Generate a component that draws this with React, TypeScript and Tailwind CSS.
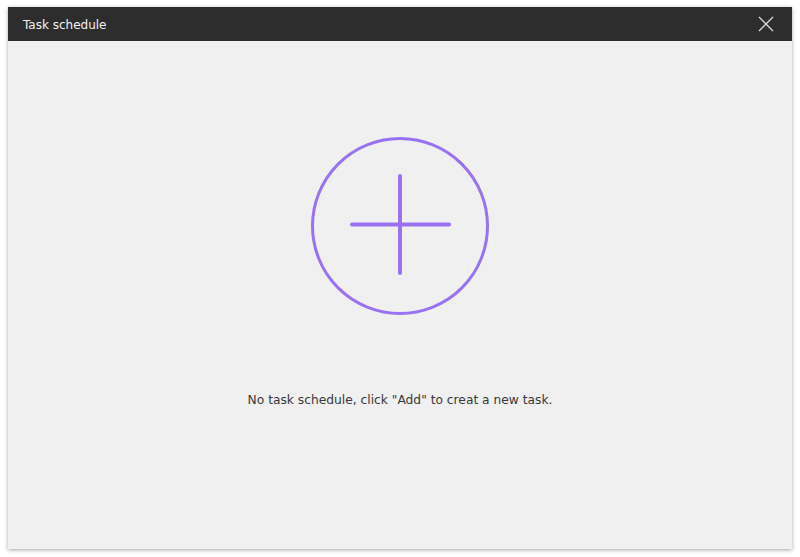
export default function App() {
  return (
    <div className="w-[800px] h-[557px] bg-white pt-[7px] pl-[8px]" style={{ fontFamily: '"DejaVu Sans", "Liberation Sans", sans-serif' }}>
      <div className="w-[784px] h-[542px] flex flex-col bg-[#f0f0f0] shadow-[0_1px_4px_rgba(0,0,0,0.35)]">
        {/* Title bar */}
        <div className="h-[34px] bg-[#2d2d2d] flex items-center justify-between pl-[15px] pr-[18px] shrink-0">
          <span className="text-[12px] text-[#f2f2f2] pt-[2px]">Task schedule</span>
          <button type="button" className="w-[16px] h-[16px] flex items-center justify-center">
            <svg width="16" height="16" viewBox="0 0 16 16">
              <path d="M1 1 L15 15 M15 1 L1 15" stroke="#d8d8d8" strokeWidth="1.3" fill="none" />
            </svg>
          </button>
        </div>

        {/* Empty state */}
        <div className="flex-1 flex flex-col items-center pt-[95px]">
          <button type="button" className="w-[180px] h-[180px]">
            <svg width="180" height="180" viewBox="0 0 180 180">
              <circle cx="90" cy="90" r="87.5" stroke="#9b71f4" strokeWidth="3" fill="none" />
              <path d="M42 88.5 L139 88.5 M90 40 L90 137" stroke="#9b71f4" strokeWidth="4" strokeLinecap="round" />
            </svg>
          </button>
          <p className="mt-[75px] text-[12.25px] text-[#383838]">
            No task schedule, click "Add" to creat a new task.
          </p>
        </div>
      </div>
    </div>
  );
}
